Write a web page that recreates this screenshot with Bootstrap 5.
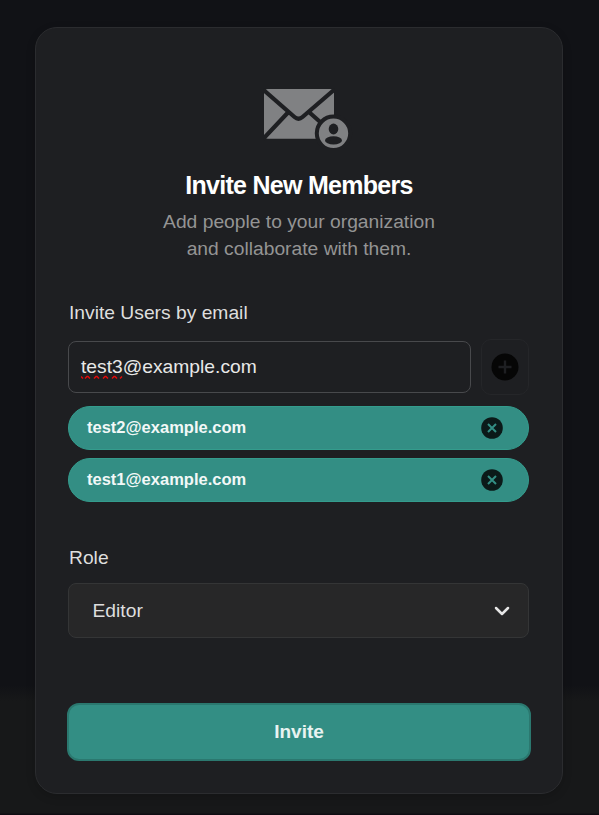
<!DOCTYPE html>
<html lang="en" data-bs-theme="dark">
<head>
<meta charset="utf-8">
<meta name="viewport" content="width=device-width, initial-scale=1">
<title>Invite New Members</title>
<link href="https://cdn.jsdelivr.net/npm/bootstrap@5.3.0/dist/css/bootstrap.min.css" rel="stylesheet">
<style>
body{font-family:"Liberation Sans",Arial,sans-serif;font-size:19.25px;line-height:28px;color:#dedede;height:815px;overflow:hidden;background:linear-gradient(#111216 0,#111216 685px,#171819 701px,#171819 813px,#0f0c12 814px)}
.invite-card{width:528px;height:767px;margin:27px 0 0 35px;padding:60px 33px 0 32px;background:#1e1f22;border:1px solid #2b2c2f;border-radius:22px;box-shadow:0 3px 10px rgba(0,0,0,.16)}
.mail-icon{display:block;margin:0 0 0 195px}
h1{font-size:25px;line-height:30px;letter-spacing:-.72px;color:#fff;margin:20px 0 8px;padding-left:1px}
.intro{color:#949494;margin-bottom:37px;line-height:27px;padding-left:1px}
.field-label{color:#dedede;line-height:28px;margin:0;padding-left:1px}
.email-row{height:56px;margin-top:12px;gap:10px}
.email-box{width:404px;height:52px;padding:0 12px;border:1px solid #48494c;border-radius:8px;background:#1e1f22;color:#e8e8e8;font-size:19.25px;line-height:50px}
.squiggle{left:0;top:33px}
.add-btn{width:48px;height:56px;border:1px solid #252629;border-radius:10px;background:#1e1f22}
.pill{height:44px;padding:0 25px 0 18px;border:1px solid #349c8d;background:#338e84;color:#f2f8f7;font-size:16.5px}
.pill span{margin-top:-2px}
.pills{gap:8px;margin-top:11px}
.role-label{margin-top:42px}
.role-box{height:55px;margin-top:11px;padding:0 18px 0 23.5px;background:#272728;border:1px solid #343536;border-radius:8px;color:#dedede}
.send-btn{width:464px;height:58px;margin:65px 0 0 -1px;border:2px solid #2b786f;border-radius:12px;background:#338e84;color:#e8f3f1;font-size:19px}
.send-btn:hover{background:#2f857b;color:#fff}
</style>
</head>
<body>
<main class="invite-card">
  <svg class="mail-icon" width="90" height="62" viewBox="0 0 90 62" aria-hidden="true">
    <rect x="1" y="1" width="70" height="49.800" rx="4" fill="#808183"/>
    <path d="M0 1.500L31.500 29Q35.500 32.500 39.500 29L71.500 1.500M25 24.500L0 51M46.500 24.500L60 36.500" fill="none" stroke="#1e1f22" stroke-width="4.200"/>
    <circle cx="70.500" cy="45.300" r="16.700" fill="#808183" stroke="#1e1f22" stroke-width="4"/>
    <ellipse cx="70.500" cy="41" rx="4.800" ry="5.400" fill="#1e1f22"/>
    <ellipse cx="70.500" cy="52.400" rx="8.500" ry="4.100" fill="#1e1f22"/>
  </svg>
  <h1 class="text-center fw-bold">Invite New Members</h1>
  <p class="intro text-center">Add people to your organization<br>and collaborate with them.</p>

  <p class="field-label">Invite Users by email</p>
  <div class="email-row d-flex align-items-center">
    <div class="email-box position-relative" role="textbox" aria-label="Email"><span class="position-relative d-inline-block">test3@example.com<svg class="squiggle position-absolute" width="42" height="5" viewBox="0 0 42 5" aria-hidden="true"><path d="M0 1.500L2 3.500M4 3.500L6 1.500H7L9 3.500M13 3.500L15 1.500H16L18 3.500M22 3.500L24 1.500H25L27 3.500M31 3.500L33 1.500H34L36 3.500M39 3.500L41 1.500" fill="none" stroke="#e00b0b" stroke-width="1.500"/></svg></span></div>
    <button class="add-btn d-flex align-items-center justify-content-center p-0" aria-label="Add email"><svg width="28" height="28" viewBox="0 0 28 28"><circle cx="14" cy="14" r="13.500" fill="#060606"/><path d="M14 7.500V20.500M7.500 14H20.500" stroke="#1e1f22" stroke-width="2.400"/></svg></button>
  </div>
  <div class="pills d-flex flex-column">
    <div class="pill rounded-pill d-flex align-items-center justify-content-between fw-bold"><span>test2@example.com</span><svg width="22" height="22" viewBox="0 0 22 22" role="img" aria-label="Remove"><circle cx="11" cy="11" r="10.800" fill="#0b1a19"/><path d="M7 7L15 15M15 7L7 15" stroke="#338e84" stroke-width="2"/></svg></div>
    <div class="pill rounded-pill d-flex align-items-center justify-content-between fw-bold"><span>test1@example.com</span><svg width="22" height="22" viewBox="0 0 22 22" role="img" aria-label="Remove"><circle cx="11" cy="11" r="10.800" fill="#0b1a19"/><path d="M7 7L15 15M15 7L7 15" stroke="#338e84" stroke-width="2"/></svg></div>
  </div>

  <p class="field-label role-label">Role</p>
  <div class="role-box d-flex align-items-center justify-content-between" role="combobox" aria-label="Role"><span>Editor</span><svg width="16" height="10" viewBox="0 0 16 10" aria-hidden="true"><path d="M2 2L8 8L14 2" fill="none" stroke="#e6e6e6" stroke-width="2.500" stroke-linecap="round" stroke-linejoin="round"/></svg></div>
  <button class="btn send-btn fw-bold p-0">Invite</button>
</main>
<script src="https://cdn.jsdelivr.net/npm/bootstrap@5.3.0/dist/js/bootstrap.bundle.min.js"></script>
</body>
</html>
